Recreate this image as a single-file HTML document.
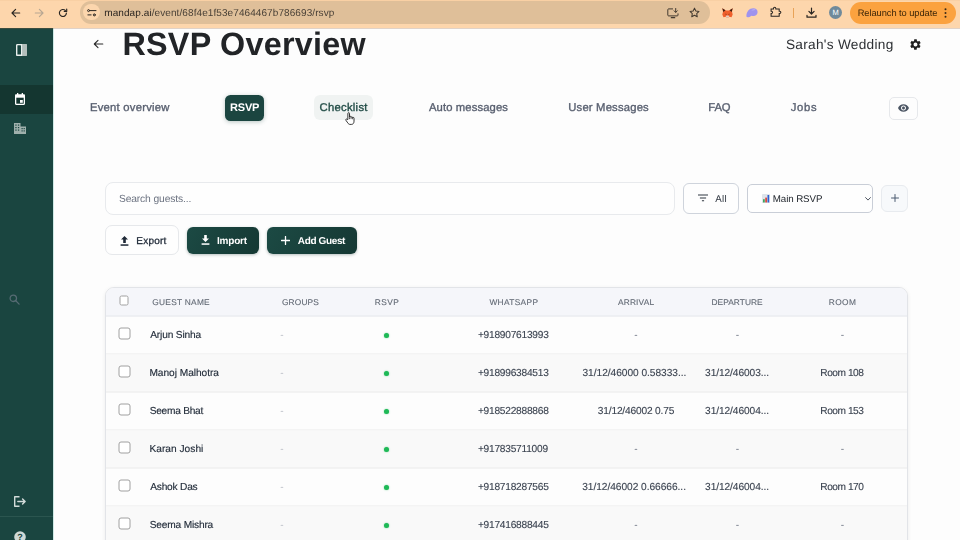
<!DOCTYPE html>
<html lang="en">
<head>
<meta charset="utf-8">
<title>RSVP Overview</title>
<style>
*{box-sizing:border-box;margin:0;padding:0}
html,body{width:960px;height:540px;overflow:hidden;background:#fdfdfd;font-family:"Liberation Sans",sans-serif;color:#1f2937;text-rendering:geometricPrecision}
.abs{position:absolute}
.t{position:absolute;white-space:nowrap;line-height:1}
/* browser chrome */
#chrome{position:absolute;left:0;top:0;width:960px;height:28px;background:#fdd6ac;box-shadow:inset 0 1px 0 rgba(200,140,80,.08)}
#chromeline{position:absolute;left:0;top:28px;width:960px;height:1px;background:rgba(150,100,60,.28);z-index:5}
#url{position:absolute;left:80px;top:1.300px;width:629.500px;height:22.500px;border-radius:11.250px;background:#dfbf99}
#site{position:absolute;left:83.200px;top:3.800px;width:16.400px;height:16.400px;border-radius:50%;background:#fcd6ad}
#relaunch{position:absolute;left:850px;top:1.600px;width:106.300px;height:22.400px;border-radius:11px;background:#fba23f}
#avatar{position:absolute;left:829px;top:6px;width:13.300px;height:13.300px;border-radius:50%;background:#6f8a9b;color:#fff;font-size:7.500px;line-height:13.300px;text-align:center}
/* sidebar */
#side{position:absolute;left:0;top:28px;width:54px;height:512px;background:#1a4540;border-right:1px solid #cfeae6}
#side .active{position:absolute;left:0;top:57px;width:53px;height:29px;background:#143630}
#side .div{position:absolute;left:0;top:488px;width:53px;height:1px;background:#2b554f}
/* buttons */
.btn{position:absolute;border-radius:6px}
/* table */
#tbl{position:absolute;left:105px;top:287px;width:803px;height:270px;border:1px solid #e2e4e8;border-radius:9px 9px 0 0;overflow:hidden;background:#fdfdfd;box-shadow:0 1px 4px rgba(0,0,0,.07)}
#thead{position:absolute;left:0;top:-2px;width:803px;height:30px;background:#f5f6fa;border-bottom:1px solid #e6e8eb;transform:translateY(.5px)}
.row{position:absolute;left:0;width:803px;height:38px;border-bottom:1px solid #ebebec;transform:translateY(.5px)}
.row.alt{background:#f9f9f9}
.cb{position:absolute;width:12px;height:12px;border:1px solid #a0a0a0;border-radius:2.5px;background:#fff;transform:translate(-.5px,-.5px)}
.dot{position:absolute;width:5.2px;height:5.2px;border-radius:50%;background:#1fb957;box-shadow:0 0 1.5px rgba(31,185,87,.7)}
.th{color:#636a75;-webkit-text-stroke:.12px #636a75}
.nm{color:#1f2937;-webkit-text-stroke:.15px #1f2937}
.c{color:#3b4350;-webkit-text-stroke:.12px #3b4350}
.tab{color:#596070;-webkit-text-stroke:.35px #596070}
</style>
</head>
<body>
<!-- ===== Browser toolbar ===== -->
<div id="chrome">
  <svg class="abs" style="left:10.500px;top:8px" width="10" height="10" viewBox="0 0 10 10" fill="none" stroke="#2a2622" stroke-width="1.150" stroke-linecap="round" stroke-linejoin="round"><path d="M8.700 5H1.200M4.600 1.400L1 5l3.600 3.600"/></svg>
  <svg class="abs" style="left:34px;top:8px" width="10" height="10" viewBox="0 0 10 10" fill="none" stroke="#b7a692" stroke-width="1.150" stroke-linecap="round" stroke-linejoin="round"><path d="M1.300 5h7.500M5.400 1.400L9 5 5.400 8.600"/></svg>
  <svg class="abs" style="left:58px;top:8px" width="10" height="10" viewBox="0 0 10 10" fill="none" stroke="#2a2622" stroke-width="1.150" stroke-linecap="round"><path d="M8.400 5a3.500 3.500 0 1 1-1.050-2.500"/><path d="M8.700 1v2.500H6.200" stroke-linejoin="round"/></svg>
  <div id="url"></div>
  <div id="site"></div>
  <svg class="abs" style="left:87px;top:8px" width="10" height="9" viewBox="0 0 10 9" fill="none" stroke="#2a2622" stroke-width="1" stroke-linecap="round"><circle cx="1.600" cy="2.600" r="1"/><path d="M3.400 2.600H9M.900 6.900h3.200"/><circle cx="7.300" cy="6.900" r="1"/></svg>
  <!-- install -->
  <svg class="abs" style="left:667px;top:7.600px" width="12" height="11" viewBox="0 0 12 11" fill="none" stroke="#42392f" stroke-width="1" stroke-linecap="round" stroke-linejoin="round"><path d="M5.600.900H1.600a.8.8 0 0 0-.8.8v5.400a.8.8 0 0 0 .8.800h8.600a.8.8 0 0 0 .8-.8V5.800"/><path d="M4.300 9.700h3.400" stroke-width="1.200"/><path d="M8.700.5v3.700M7.100 2.800l1.600 1.600 1.600-1.600"/></svg>
  <!-- star -->
  <svg class="abs" style="left:688.500px;top:7.200px" width="11" height="11" viewBox="0 0 12 12" fill="none" stroke="#42392f" stroke-width="1.100" stroke-linejoin="round"><path d="M6 1.200l1.500 3.100 3.400.5-2.500 2.400.6 3.400L6 9l-3 1.600.6-3.400L1.100 4.800l3.400-.5z"/></svg>
  <!-- metamask -->
  <svg class="abs" style="left:722px;top:7.500px" width="11" height="10" viewBox="0 0 11 10"><path d="M.3.200l3.700 2.400h3L10.700.200 10 3.800l.7 2.700-1.200 2.700-2.300-.5-.9.700H4.700l-.9-.7-2.300.5L.3 6.500 1 3.800z" fill="#ef5f2b"/><path d="M.3.200l3.100 2L1.400 4zM10.700.200l-3.100 2 2 1.800z" fill="#3d2115"/><path d="M3.800 8.700l.9.700h1.600l.9-.7-.6-1.300H4.400z" fill="#e3cfc2"/><path d="M3.400 5.700l1 .4-.3.900zM7.600 5.700l-1 .4.300.900z" fill="#2b1a12"/></svg>
  <!-- phantom -->
  <svg class="abs" style="left:746px;top:8px" width="12" height="10" viewBox="0 0 12 10"><path d="M.4 8.200C.4 3.800 3.300.300 7.300.300c2.600 0 4.300 1.600 4.300 3.700 0 2.400-2 4-4.100 4-.9 0-1.400-.3-1.900-.3-.8 0-1.400 1.600-3.100 1.600C1.300 9.300.400 8.900.400 8.200z" fill="#9f93ee"/><path d="M5.300 2.300c1.300-.9 3.100-1 4.300-.3-1.500-.1-2.900.2-4.300.3z" fill="#c9c1f7"/></svg>
  <!-- puzzle -->
  <svg class="abs" style="left:770px;top:6.300px" width="12" height="11" viewBox="0 0 12 11" fill="none" stroke="#2a2622" stroke-width="1.050"><path d="M1.100 2.900h2.400V2.400a1.150 1.150 0 0 1 2.300 0v.5h3.400v2.300h.5a1.150 1.150 0 0 1 0 2.300h-.5v2.800H1.100V7.500h.3a1.150 1.150 0 0 0 0-2.300h-.3z"/></svg>
  <div class="abs" style="left:793px;top:8px;width:1px;height:9.500px;background:#e8a358"></div>
  <!-- download -->
  <svg class="abs" style="left:805.500px;top:7px" width="11" height="11" viewBox="0 0 11 11" fill="none" stroke="#2a2622" stroke-width="1.200" stroke-linecap="round" stroke-linejoin="round"><path d="M5.500 1v5.800M2.900 4.400l2.600 2.600 2.600-2.600M1 8.300v1.900h9V8.300"/></svg>
  <div id="avatar">M</div>
  <div id="relaunch"></div>
  <svg class="abs" style="left:944px;top:8px" width="3" height="10" viewBox="0 0 3 10" fill="#3a2a18"><circle cx="1.500" cy="1.300" r="1"/><circle cx="1.500" cy="5" r="1"/><circle cx="1.500" cy="8.700" r="1"/></svg>
</div>

<div id="chromeline"></div>
<!-- ===== Sidebar ===== -->
<div id="side">
  <div class="active"></div>
  <div class="div"></div>
  <!-- panel icon -->
  <svg class="abs" style="left:15.800px;top:15.900px" width="11.700" height="11.900" viewBox="0 0 11.700 11.900"><rect width="11.700" height="11.900" rx="1.500" fill="#b3bebb"/><path d="M6.100 0H1.500A1.500 1.500 0 0 0 0 1.500v8.900a1.500 1.500 0 0 0 1.500 1.500h4.600z" fill="#e9efed"/><rect x="1.400" y="1.350" width="3.600" height="9.200" rx=".3" fill="#1a4540"/></svg>
  <!-- calendar -->
  <svg class="abs" style="left:15px;top:65px" width="10" height="12" viewBox="0 0 10 12"><path d="M1.200 1.300h7.600c.7 0 1.200.5 1.200 1.200v8.300c0 .7-.5 1.200-1.200 1.200H1.200C.5 12 0 11.500 0 10.800V2.500c0-.7.500-1.200 1.200-1.200z" fill="#fff"/><rect x="2" y="0" width="1.300" height="2.400" fill="#fff"/><rect x="6.700" y="0" width="1.300" height="2.400" fill="#fff"/><rect x="1.300" y="4.700" width="7.400" height="6" fill="#143630"/><rect x="5" y="7" width="2.800" height="2.800" fill="#fff"/></svg>
  <!-- apartment -->
  <svg class="abs" style="left:14px;top:95px" width="12" height="11" viewBox="0 0 12 11"><path d="M0 0h6.500v3.500H12V11H0z" fill="#9fb0ac"/><g fill="#1a4540"><rect x="1.300" y="1.500" width="1.300" height="1.200"/><rect x="3.900" y="1.500" width="1.300" height="1.200"/><rect x="1.300" y="4" width="1.300" height="1.200"/><rect x="3.900" y="4" width="1.300" height="1.200"/><rect x="1.300" y="6.500" width="1.300" height="1.200"/><rect x="3.900" y="6.500" width="1.300" height="1.200"/><rect x="7.500" y="5" width="1.200" height="1.200"/><rect x="9.600" y="5" width="1.200" height="1.200"/><rect x="7.500" y="7.300" width="1.200" height="1.200"/><rect x="9.600" y="7.300" width="1.200" height="1.200"/></g></svg>
  <!-- search -->
  <svg class="abs" style="left:9.300px;top:265.500px" width="11" height="11" viewBox="0 0 11 11" fill="none" stroke="#566b73" stroke-width="1.300" stroke-linecap="round"><circle cx="4.300" cy="4.300" r="3.200"/><path d="M6.800 6.800l3.300 3.300"/></svg>
  <!-- logout -->
  <svg class="abs" style="left:14px;top:468px" width="12" height="11" viewBox="0 0 12 11" fill="none" stroke="#d3dcda" stroke-width="1.400" stroke-linejoin="round"><path d="M5.500.7H.7v9.600h4.800"/><path d="M3.800 5.500h7M8.600 3l2.500 2.500L8.600 8" stroke-linecap="round"/></svg>
  <!-- help -->
  <svg class="abs" style="left:14px;top:503px" width="12" height="12" viewBox="0 0 12 12"><circle cx="6" cy="6" r="5.800" fill="#cfd9d6"/><text x="6" y="9.300" font-family="Liberation Sans, sans-serif" font-size="9" font-weight="bold" fill="#1a4540" text-anchor="middle">?</text></svg>
</div>

<!-- ===== Header ===== -->
<svg class="abs" style="left:93px;top:39px" width="11" height="10" viewBox="0 0 11 10" fill="none" stroke="#2b2b2b" stroke-width="1.100" stroke-linecap="round" stroke-linejoin="round"><path d="M9.800 5H1.500M5 1.300L1.300 5 5 8.700"/></svg>
<svg class="abs" style="left:909.400px;top:37.700px" width="13" height="13" viewBox="0 0 24 24"><path fill="#1f1f1f" d="M19.140 12.940c.04-.3.060-.61.060-.94 0-.32-.02-.64-.07-.94l2.030-1.580a.49.490 0 0 0 .12-.61l-1.920-3.320a.488.488 0 0 0-.59-.22l-2.390.96c-.5-.38-1.030-.7-1.620-.94l-.36-2.540a.484.484 0 0 0-.48-.41h-3.840c-.24 0-.43.170-.47.410l-.36 2.540c-.59.240-1.130.57-1.620.94l-2.390-.96c-.22-.08-.47 0-.59.220L2.740 8.870c-.12.210-.8.470.12.610l2.030 1.580c-.5.300-.9.630-.9.940s.2.640.7.940l-2.030 1.580a.49.490 0 0 0-.12.610l1.920 3.320c.12.220.37.290.59.220l2.390-.96c.5.380 1.030.7 1.620.94l.36 2.540c.5.240.24.410.48.410h3.840c.24 0 .44-.17.470-.41l.36-2.540c.59-.24 1.130-.56 1.620-.94l2.390.96c.22.080.47 0 .59-.22l1.920-3.320c.12-.22.070-.47-.12-.61l-2.010-1.580zM12 15.600c-1.980 0-3.600-1.620-3.600-3.600s1.620-3.600 3.600-3.600 3.600 1.620 3.600 3.600-1.620 3.600-3.600 3.600z"/></svg>

<!-- ===== Tabs ===== -->
<div class="abs" style="left:225px;top:95px;width:39.300px;height:25.600px;border-radius:5.500px;background:#1b4540;box-shadow:0 1px 4px rgba(27,69,64,.3)"></div>
<div class="abs" style="left:314px;top:95px;width:59px;height:25px;border-radius:6px;background:#f0f3f2"></div>
<div class="abs" style="left:889px;top:96.500px;width:28.500px;height:23px;border:1px solid #e6e8eb;border-radius:5px;background:#fdfdfd"></div>
<svg class="abs" style="left:897px;top:102px" width="13" height="12" viewBox="0 0 24 24"><path fill="#4b5563" d="M12 4.500C7 4.500 2.730 7.610 1 12c1.730 4.390 6 7.500 11 7.500s9.270-3.110 11-7.500c-1.730-4.390-6-7.500-11-7.500zM12 17c-2.760 0-5-2.240-5-5s2.240-5 5-5 5 2.240 5 5-2.240 5-5 5zm0-8c-1.660 0-3 1.340-3 3s1.340 3 3 3 3-1.340 3-3-1.340-3-3-3z"/></svg>

<!-- ===== Search row ===== -->
<div class="abs" style="left:105px;top:182px;width:570px;height:33px;border:1px solid #e8eaed;border-radius:8px;background:#fefefe"></div>

<div class="btn" style="left:683px;top:183px;width:56px;height:31px;border:1px solid #cfd4dc;background:#fefefe"></div>
<svg class="abs" style="left:698px;top:194.400px" width="10" height="8" viewBox="0 0 10 8" fill="none" stroke="#2f3640" stroke-width="1.050" stroke-linecap="butt"><path d="M0 1h10M1.900 3.900h6.200M3.900 6.800h2.200"/></svg>

<div class="btn" style="left:747px;top:184px;width:126px;height:29px;border:1px solid #c9ced7;background:#fefefe;border-radius:5px"></div>
<svg class="abs" style="left:762.400px;top:193.500px" width="8" height="9.200" viewBox="0 0 8 9.200"><rect width="8" height="9.200" rx=".8" fill="#dfe4ea"/><rect x="1.100" y="5.200" width="1.600" height="3.300" fill="#2f9e4f"/><rect x="3.300" y="3.600" width="1.600" height="4.900" fill="#d8382f"/><rect x="5.500" y="1" width="1.700" height="7.500" fill="#2f5fd0"/></svg>
<svg class="abs" style="left:864.500px;top:196.500px" width="6" height="4" viewBox="0 0 6 4" fill="none" stroke="#3b4350" stroke-width=".9" stroke-linecap="round" stroke-linejoin="round"><path d="M.6.600L3 3.100 5.400.600"/></svg>

<div class="btn" style="left:881px;top:185px;width:27px;height:27px;border:1px solid #e8ebef;background:#f7f9fb;border-radius:6px"></div>
<svg class="abs" style="left:890.500px;top:194.300px" width="8" height="8" viewBox="0 0 8 8" fill="none" stroke="#4b5a70" stroke-width="1" stroke-linecap="round"><path d="M4 .5v7M.5 4h7"/></svg>

<!-- ===== Action buttons ===== -->
<div class="btn" style="left:105px;top:225px;width:74px;height:30px;border:1px solid #e6e8eb;background:#fefefe;border-radius:7px"></div>
<svg class="abs" style="left:120.200px;top:235.500px" width="9" height="10" viewBox="0 0 9 10" fill="#1f2937"><path d="M4.500 0L8 3.600H5.800V7H3.200V3.600H1z"/><rect x=".6" y="8.300" width="7.800" height="1.500"/></svg>

<div class="btn" style="left:187px;top:227px;width:72px;height:27px;background:linear-gradient(120deg,#1c4a44,#153833);box-shadow:0 1px 3px rgba(20,50,46,.3)"></div>
<svg class="abs" style="left:201.300px;top:235.400px" width="9" height="10" viewBox="0 0 9 10" fill="#fff"><path d="M3.200 0h2.600v3.400H8L4.500 7 1 3.400h2.200z"/><rect x=".6" y="8.300" width="7.800" height="1.500"/></svg>

<div class="btn" style="left:267px;top:227px;width:90px;height:27px;background:linear-gradient(120deg,#1c4a44,#153833);box-shadow:0 1px 3px rgba(20,50,46,.3)"></div>
<svg class="abs" style="left:281px;top:236px" width="9" height="9" viewBox="0 0 9 9" fill="none" stroke="#fff" stroke-width="1.300" stroke-linecap="round"><path d="M4.500.5v8M.5 4.500h8"/></svg>

<!-- ===== Table ===== -->
<div id="tbl">
  <div id="thead"></div>
  <div class="row" style="top:28px"></div>
  <div class="row alt" style="top:66px"></div>
  <div class="row" style="top:104px"></div>
  <div class="row alt" style="top:142px"></div>
  <div class="row" style="top:180px"></div>
  <div class="row alt" style="top:218px"></div>
</div>
<div id="txt" style="position:absolute;left:0;top:0;width:960px;height:540px;will-change:transform">
<!--TEXTS-->
<div class="t" style="left:104.25px;top:9px;font-size:10px;letter-spacing:0.085px;color:#4a4137"><span style="color:#2b2621">mandap.ai</span>/event/68f4e1f53e7464467b786693/rsvp</div>
<div class="t " style="left:857.65px;top:9.00px;font-size:9.3px;letter-spacing:-0.053px;color:#3a2508">Relaunch to update</div>
<div class="t " style="left:122.45px;top:28.00px;font-size:32.3px;letter-spacing:0.263px;font-weight:bold;color:#222427">RSVP Overview</div>
<div class="t " style="left:785.95px;top:38.00px;font-size:13.66px;letter-spacing:0.289px;color:#2c2f33">Sarah's Wedding</div>
<div class="t tab" style="left:89.90px;top:103.00px;font-size:11.26px;letter-spacing:0.250px;">Event overview</div>
<div class="t " style="left:229.95px;top:103.00px;font-size:11.0px;letter-spacing:-0.150px;font-weight:bold;color:#fff">RSVP</div>
<div class="t " style="left:319.50px;top:103.00px;font-size:11.26px;letter-spacing:0.288px;color:#1f4a44;-webkit-text-stroke:.35px #1f4a44">Checklist</div>
<div class="t tab" style="left:429.00px;top:103.00px;font-size:11.26px;letter-spacing:0.121px;">Auto messages</div>
<div class="t tab" style="left:568.25px;top:103.00px;font-size:11.26px;letter-spacing:0.192px;">User Messages</div>
<div class="t tab" style="left:708.30px;top:103.00px;font-size:11.26px;letter-spacing:-0.150px;">FAQ</div>
<div class="t tab" style="left:790.75px;top:103.00px;font-size:11.26px;letter-spacing:0.667px;">Jobs</div>
<div class="t " style="left:118.90px;top:195.00px;font-size:10.3px;letter-spacing:-0.133px;color:#6b7280">Search guests...</div>
<div class="t " style="left:715.20px;top:195.00px;font-size:9.75px;letter-spacing:0.275px;color:#2f3640">All</div>
<div class="t " style="left:772.85px;top:195.00px;font-size:9.75px;letter-spacing:-0.106px;color:#22272e">Main RSVP</div>
<div class="t " style="left:136.35px;top:237.00px;font-size:10px;letter-spacing:0.220px;color:#1f2937;-webkit-text-stroke:.3px #1f2937">Export</div>
<div class="t " style="left:217.05px;top:237.00px;font-size:10px;letter-spacing:-0.210px;font-weight:bold;color:#fff">Import</div>
<div class="t " style="left:297.85px;top:237.00px;font-size:10px;letter-spacing:-0.369px;font-weight:bold;color:#fff">Add Guest</div>
<div class="t th" style="left:152.25px;top:298.00px;font-size:8.36px;letter-spacing:0.267px;">GUEST NAME</div>
<div class="t th" style="left:282.00px;top:298.00px;font-size:8.36px;letter-spacing:0.130px;">GROUPS</div>
<div class="t th" style="left:374.85px;top:298.00px;font-size:8.36px;letter-spacing:0.433px;">RSVP</div>
<div class="t th" style="left:489.40px;top:298.00px;font-size:8.36px;letter-spacing:0.336px;">WHATSAPP</div>
<div class="t th" style="left:618.00px;top:298.00px;font-size:8.36px;letter-spacing:0.167px;">ARRIVAL</div>
<div class="t th" style="left:711.45px;top:298.00px;font-size:8.36px;letter-spacing:0.062px;">DEPARTURE</div>
<div class="t th" style="left:828.65px;top:298.00px;font-size:8.36px;letter-spacing:0.467px;">ROOM</div>
<div class="cb" style="left:119px;top:328px"></div>
<div class="dot" style="left:383.6px;top:332.7px"></div>
<div class="t nm" style="left:150.20px;top:331.00px;font-size:10.17px;letter-spacing:-0.145px;">Arjun Sinha</div>
<div class="t" style="left:281.9px;top:330.50px;font-size:10.17px;color:#b8bcc4;transform:translateX(-50%)">-</div>
<div class="t c" style="left:477.90px;top:331.00px;font-size:10.17px;letter-spacing:-0.229px;">+918907613993</div>
<div class="t" style="left:636px;top:331.00px;font-size:10.17px;color:#6b7280;transform:translateX(-50%)">-</div>
<div class="t" style="left:737.4px;top:331.00px;font-size:10.17px;color:#6b7280;transform:translateX(-50%)">-</div>
<div class="t" style="left:842.4px;top:331.00px;font-size:10.17px;color:#6b7280;transform:translateX(-50%)">-</div>
<div class="cb" style="left:119px;top:366px"></div>
<div class="dot" style="left:383.6px;top:370.7px"></div>
<div class="t nm" style="left:149.45px;top:369.00px;font-size:10.17px;letter-spacing:-0.035px;">Manoj Malhotra</div>
<div class="t" style="left:281.9px;top:368.50px;font-size:10.17px;color:#b8bcc4;transform:translateX(-50%)">-</div>
<div class="t c" style="left:477.90px;top:369.00px;font-size:10.17px;letter-spacing:-0.229px;">+918996384513</div>
<div class="t c" style="left:582.50px;top:369.00px;font-size:10.17px;letter-spacing:-0.033px;">31/12/46000 0.58333...</div>
<div class="t c" style="left:705.10px;top:369.00px;font-size:10.17px;letter-spacing:-0.077px;">31/12/46003...</div>
<div class="t c" style="left:820.25px;top:369.00px;font-size:10.17px;letter-spacing:-0.450px;">Room 108</div>
<div class="cb" style="left:119px;top:404px"></div>
<div class="dot" style="left:383.6px;top:408.7px"></div>
<div class="t nm" style="left:149.70px;top:407.00px;font-size:10.17px;letter-spacing:-0.250px;">Seema Bhat</div>
<div class="t" style="left:281.9px;top:406.50px;font-size:10.17px;color:#b8bcc4;transform:translateX(-50%)">-</div>
<div class="t c" style="left:477.90px;top:407.00px;font-size:10.17px;letter-spacing:-0.229px;">+918522888868</div>
<div class="t c" style="left:597.80px;top:407.00px;font-size:10.17px;letter-spacing:-0.170px;">31/12/46002 0.75</div>
<div class="t c" style="left:705.10px;top:407.00px;font-size:10.17px;letter-spacing:-0.077px;">31/12/46004...</div>
<div class="t c" style="left:820.25px;top:407.00px;font-size:10.17px;letter-spacing:-0.450px;">Room 153</div>
<div class="cb" style="left:119px;top:442px"></div>
<div class="dot" style="left:383.6px;top:446.7px"></div>
<div class="t nm" style="left:149.45px;top:445.00px;font-size:10.17px;letter-spacing:0.025px;">Karan Joshi</div>
<div class="t" style="left:281.9px;top:444.50px;font-size:10.17px;color:#b8bcc4;transform:translateX(-50%)">-</div>
<div class="t c" style="left:477.90px;top:445.00px;font-size:10.17px;letter-spacing:-0.229px;">+917835711009</div>
<div class="t" style="left:636px;top:445.00px;font-size:10.17px;color:#6b7280;transform:translateX(-50%)">-</div>
<div class="t" style="left:737.4px;top:445.00px;font-size:10.17px;color:#6b7280;transform:translateX(-50%)">-</div>
<div class="t" style="left:842.4px;top:445.00px;font-size:10.17px;color:#6b7280;transform:translateX(-50%)">-</div>
<div class="cb" style="left:119px;top:480px"></div>
<div class="dot" style="left:383.6px;top:484.7px"></div>
<div class="t nm" style="left:150.20px;top:483.00px;font-size:10.17px;letter-spacing:-0.206px;">Ashok Das</div>
<div class="t" style="left:281.9px;top:482.50px;font-size:10.17px;color:#b8bcc4;transform:translateX(-50%)">-</div>
<div class="t c" style="left:477.90px;top:483.00px;font-size:10.17px;letter-spacing:-0.229px;">+918718287565</div>
<div class="t c" style="left:582.20px;top:483.00px;font-size:10.17px;letter-spacing:-0.033px;">31/12/46002 0.66666...</div>
<div class="t c" style="left:705.10px;top:483.00px;font-size:10.17px;letter-spacing:-0.077px;">31/12/46004...</div>
<div class="t c" style="left:820.25px;top:483.00px;font-size:10.17px;letter-spacing:-0.450px;">Room 170</div>
<div class="cb" style="left:119px;top:518px"></div>
<div class="dot" style="left:383.6px;top:522.7px"></div>
<div class="t nm" style="left:149.70px;top:521.00px;font-size:10.17px;letter-spacing:-0.173px;">Seema Mishra</div>
<div class="t" style="left:281.9px;top:520.50px;font-size:10.17px;color:#b8bcc4;transform:translateX(-50%)">-</div>
<div class="t c" style="left:477.90px;top:521.00px;font-size:10.17px;letter-spacing:-0.229px;">+917416888445</div>
<div class="t" style="left:636px;top:521.00px;font-size:10.17px;color:#6b7280;transform:translateX(-50%)">-</div>
<div class="t" style="left:737.4px;top:521.00px;font-size:10.17px;color:#6b7280;transform:translateX(-50%)">-</div>
<div class="t" style="left:842.4px;top:521.00px;font-size:10.17px;color:#6b7280;transform:translateX(-50%)">-</div>
<div class="cb" style="left:119.5px;top:296px;width:9.5px;height:9.5px;border-radius:2px"></div>
<!--/TEXTS-->
</div>
<!-- cursor -->
<svg class="abs" style="left:344.600px;top:112.400px" width="11" height="13.200" viewBox="0 0 10 12"><path d="M2.600 6.900V1.400a.75.75 0 0 1 1.500 0v3.200a.7.7 0 0 1 1.400.1V5a.7.7 0 0 1 1.400.2v.3a.65.65 0 0 1 1.300.2v2.700c0 1.700-.9 2.900-2.400 2.900H4.600c-.9 0-1.500-.5-2.100-1.400L.8 7.500c-.5-.8.500-1.500 1.100-.8z" fill="#fff" stroke="#262626" stroke-width=".85" stroke-linejoin="round"/><path d="M4.100 4.800v1.700M5.500 5.100v1.400M6.900 5.500v1.100" stroke="#262626" stroke-width=".7" fill="none"/></svg>
</body>
</html>
